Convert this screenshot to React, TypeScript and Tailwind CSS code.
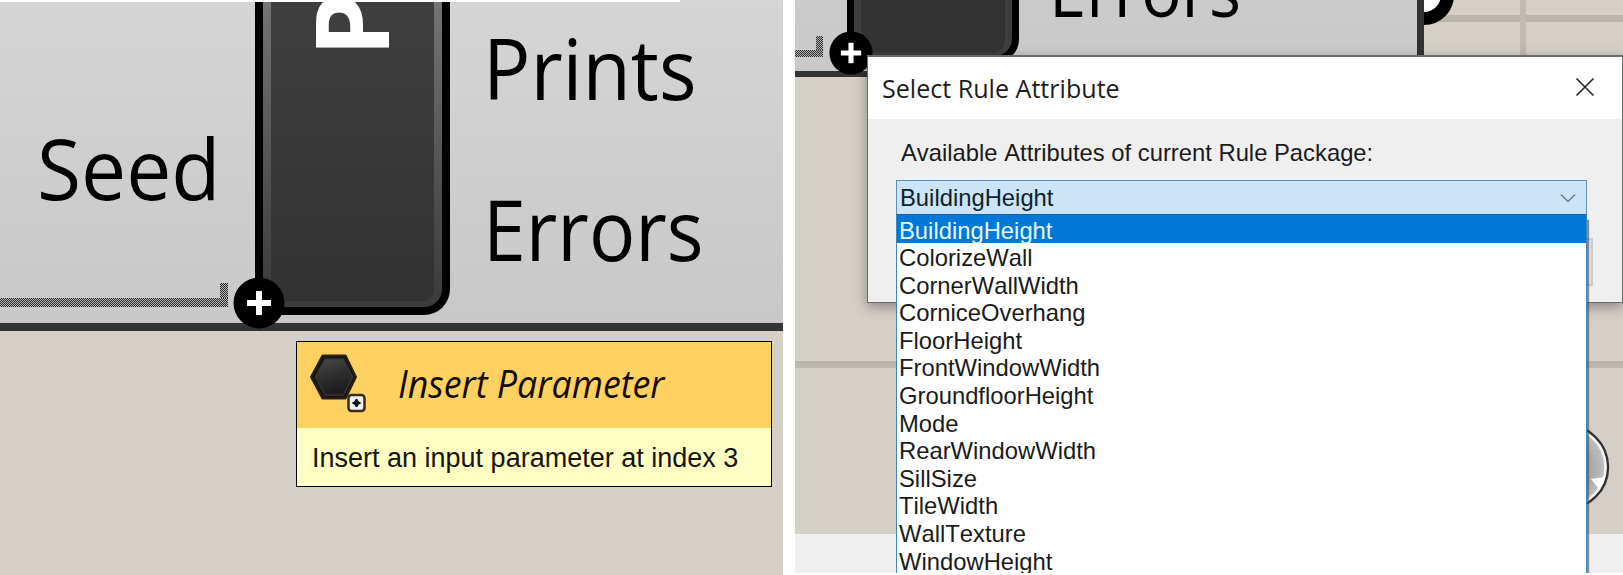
import React from "react";

const attributes = [
  "BuildingHeight",
  "ColorizeWall",
  "CornerWallWidth",
  "CorniceOverhang",
  "FloorHeight",
  "FrontWindowWidth",
  "GroundfloorHeight",
  "Mode",
  "RearWindowWidth",
  "SillSize",
  "TileWidth",
  "WallTexture",
  "WindowHeight",
];

const humanist = "font-['Open_Sans','Noto_Sans',sans-serif]";
const grotesque = "font-['Liberation_Sans',Arial,sans-serif] [font-kerning:none]";
const hatch =
  "bg-[repeating-conic-gradient(#2e2e2e_0%_25%,#b4b4b4_0%_50%)] bg-[length:2px_2px]";

function PlusButton({ className }: { className: string }) {
  return (
    <svg viewBox="0 0 52 52" className={className} aria-hidden="true">
      <circle cx="26" cy="26" r="25.5" fill="#000" />
      <path d="M14 26H38M26 14V38" stroke="#fff" strokeWidth="6" />
    </svg>
  );
}

function ParameterIcon() {
  return (
    <svg viewBox="0 0 60 62" className="h-[62px] w-[60px] shrink-0" aria-hidden="true">
      <defs>
        <linearGradient id="hex" x1="0" y1="0" x2="0.3" y2="1">
          <stop offset="0" stopColor="#4a4a4a" />
          <stop offset="0.5" stopColor="#303030" />
          <stop offset="1" stopColor="#1c1c1c" />
        </linearGradient>
      </defs>
      <path d="M15.500 3.500H38.500L49 25L38.500 46.500H15.500L4 25Z" fill="#161412" stroke="#2b210e" strokeWidth="2" strokeLinejoin="round" />
      <path d="M18 7H36.500L45.500 25L36.500 43H18L8.500 25Z" fill="url(#hex)" stroke="#363636" strokeWidth="1.500" />
      <rect x="41.500" y="43" width="16" height="16" rx="3" fill="#eceef2" stroke="#3a2c12" strokeWidth="2.500" />
      <path d="M45.500 51L49.500 47L53.500 51L49.500 55Z" fill="#111" />
      <path d="M45.500 51H53.500M49.500 47V55" stroke="#111" strokeWidth="2" />
    </svg>
  );
}

function InsertTooltip() {
  return (
    <div className="absolute left-[296px] top-[341px] flex h-[146px] w-[476px] flex-col border border-black bg-[#ffffc3]">
      <div className="flex h-[86px] items-start bg-[#ffd160] pl-[10px] pt-[10px]">
        <ParameterIcon />
        <span className={`ml-[31px] mt-[8px] origin-left scale-x-[0.942] whitespace-nowrap text-[38px] italic leading-[46px] text-[#140c00] ${humanist}`}>
          Insert Parameter
        </span>
      </div>
      <div className={`whitespace-nowrap pl-[15px] pt-[14px] text-[27px] leading-[32px] text-[#14140a] ${grotesque}`}>
        Insert an input parameter at index 3
      </div>
    </div>
  );
}

function ComponentCloseUp() {
  return (
    <section className="relative h-full w-[783px] shrink-0 overflow-hidden bg-[#d4cfc7]">
      <div className="flex h-[331px] border-b-[8px] border-[#333] bg-linear-to-b from-[#d5d5d5] to-[#c8c8c8]">
        <div className="flex w-[255px] shrink-0 flex-col">
          <div className="flex h-[283px] items-end">
            <span className={`mb-[58px] ml-[37px] origin-left scale-x-[0.945] whitespace-nowrap text-[85px] leading-[115px] ${humanist}`}>Seed</span>
          </div>
          <div className="flex w-[228px] flex-col items-end">
            <div className={`h-[15px] w-[8px] ${hatch}`} />
            <div className={`h-[9px] w-full ${hatch}`} />
          </div>
        </div>
        <div className="h-[315px] w-[195px] shrink-0 overflow-hidden rounded-br-[26px] border-x-[8px] border-b-[8px] border-black bg-linear-to-b from-[#747474] to-[#3a3a3a] px-[8px]">
          <div className="flex h-[301px] justify-center rounded-br-[12px] bg-linear-to-b from-[#3f3f3f] to-[#323232]">
            <span className="mt-[-52px] flex h-[100px] w-[115px] items-end justify-center overflow-visible">
              <span className={`translate-x-[-3px] translate-y-[9px] rotate-180 whitespace-nowrap text-[103px] font-bold leading-[115px] text-white [writing-mode:vertical-rl] ${humanist}`}>P</span>
            </span>
          </div>
        </div>
        <div className={`flex flex-col pl-[33px] pt-[10px] text-[84px] leading-[115px] ${humanist}`}>
          <span className="origin-left scale-x-[0.938]">Prints</span>
          <span className="mt-[46px] origin-left scale-x-[0.918]">Errors</span>
        </div>
      </div>
      <PlusButton className="absolute left-[233px] top-[277px] h-[52px] w-[52px]" />
      <div className="absolute left-0 top-0 h-[2px] w-[680px] bg-white" />
      <InsertTooltip />
    </section>
  );
}

function CanvasBackdrop() {
  return (
    <div className="absolute inset-0 flex flex-col">
      <div className="flex h-[77px]">
        <div className="flex w-[629px] shrink-0 overflow-hidden border-b-[6px] border-r-[7px] border-[#333] bg-linear-to-b from-[#cbcbcb] to-[#c9c9c9]">
          <div className="flex w-[52px] shrink-0 flex-col pt-[36px]">
            <div className="flex w-[28px] flex-col items-end">
              <div className={`h-[14px] w-[7px] ${hatch}`} />
              <div className={`h-[7px] w-full ${hatch}`} />
            </div>
          </div>
          <div className="h-[63px] w-[172px] shrink-0 rounded-br-[24px] border-x-[7px] border-b-[7px] border-black bg-[#3e3e3e] px-[7px]">
            <div className="h-[52px] rounded-br-[12px] bg-[#333]" />
          </div>
          <span className={`mt-[-63px] ml-[30px] h-[102px] origin-left scale-x-[0.895] text-[75px] leading-[102px] ${humanist}`}>Errors</span>
        </div>
        <div className="relative flex-1">
          <div className="h-[22px] border-b-[7px] border-[#bbb6ac]" />
          <div className="mt-[-22px] ml-[96px] h-[55px] w-[6px] bg-[#c0bab0]" />
          <svg viewBox="0 0 32 28" className="absolute left-0 top-0 h-[28px] w-[32px]" aria-hidden="true">
            <circle cx="0" cy="-5" r="23.500" fill="#fff" stroke="#000" strokeWidth="13" />
          </svg>
        </div>
      </div>
      <div className="mt-[284px] h-[7px] bg-[#bbb6ad]" />
      <div className="flex h-[166px] items-start justify-end">
        <svg viewBox="0 0 90 90" className="mr-[12px] mt-[54px] h-[90px] w-[90px]" aria-hidden="true">
          <defs>
            <radialGradient id="knob">
              <stop offset="0" stopColor="#888" />
              <stop offset="0.5" stopColor="#a2a2a2" />
              <stop offset="1" stopColor="#c5c5c5" />
            </radialGradient>
          </defs>
          <circle cx="45" cy="45" r="42" fill="url(#knob)" stroke="#333" strokeWidth="2.500" />
          <circle cx="45" cy="45" r="39.500" fill="none" stroke="#f4f4f4" strokeWidth="2.500" />
          <path d="M70 57L84 55L78 67Z" fill="#fff" />
        </svg>
      </div>
      <div className="h-[39px] bg-[#efefef]" />
      <div className="h-[2px] bg-white" />
    </div>
  );
}

function AttributeDialog() {
  return (
    <div className="absolute left-[72px] top-[55px] flex h-[248px] w-[756px] flex-col border border-t-2 border-[#6b6b6b] bg-[#efefef] shadow-[0_4px_12px_rgba(0,0,0,0.35)]">
      <header className="flex h-[62px] shrink-0 items-center justify-between bg-white pl-[14px] pr-[27px]">
        <h1 className={`origin-left scale-x-[0.965] whitespace-nowrap text-[26px] leading-[36px] text-[#1c1c1c] ${humanist}`}>Select Rule Attribute</h1>
        <svg viewBox="0 0 20 20" className="mb-[2px] h-[20px] w-[20px]" aria-label="Close">
          <path d="M1.500 1.500L18.500 18.500M18.500 1.500L1.500 18.500" stroke="#222" strokeWidth="1.600" />
        </svg>
      </header>
      <p className={`ml-[33px] mt-[20px] whitespace-nowrap text-[23.8px] leading-[28px] text-[#1a1a1a] ${grotesque}`}>
        Available Attributes of current Rule Package:
      </p>
      <div className="ml-[28px] mt-[13px] flex h-[35px] w-[691px] shrink-0 items-center justify-between border border-[#5f8fb5] bg-[#cce4f7] pl-[3px] pr-[10px] pt-px">
        <span className={`text-[23.8px] leading-[28px] text-[#10202c] ${grotesque}`}>BuildingHeight</span>
        <svg viewBox="0 0 16 10" className="h-[10px] w-[16px]" aria-hidden="true">
          <path d="M1 1.500L8 8.500L15 1.500" fill="none" stroke="#68808f" strokeWidth="1.500" />
        </svg>
      </div>
      <div className="ml-[650px] mt-[23px] h-[48px] w-[75px] shrink-0 border-2 border-[#cbcbcb] bg-[#e4e4e4]" />
    </div>
  );
}

function AttributeList() {
  return (
    <ul className={`absolute left-[101px] top-[214px] h-[359px] w-[691px] overflow-hidden border-x border-t border-[#3f87bd] border-t-[#1d5f98] bg-white text-[23.8px] leading-[27.6px] text-[#1a1a1a] shadow-[2px_6px_1px_rgba(60,75,90,0.6)] ${grotesque}`}>
      {attributes.map((name, index) => (
        <li key={name} className={index === 0 ? "h-[28px] bg-[#0078d7] pl-[2px] pt-[2px] text-[#e8f8ff]" : "h-[27.6px] pl-[2px] pt-px"}>
          {name}
        </li>
      ))}
    </ul>
  );
}

export default function App() {
  return (
    <main className="flex h-[575px] w-[1623px] gap-[12px] overflow-hidden bg-white text-black">
      <ComponentCloseUp />
      <section className="relative h-full w-[828px] shrink-0 overflow-hidden bg-[#d4cfc7]">
        <CanvasBackdrop />
        <PlusButton className="absolute left-[34px] top-[31px] h-[44px] w-[44px]" />
        <AttributeDialog />
        <AttributeList />
        <div className="absolute bottom-0 left-0 h-[2px] w-full bg-white" />
      </section>
    </main>
  );
}
